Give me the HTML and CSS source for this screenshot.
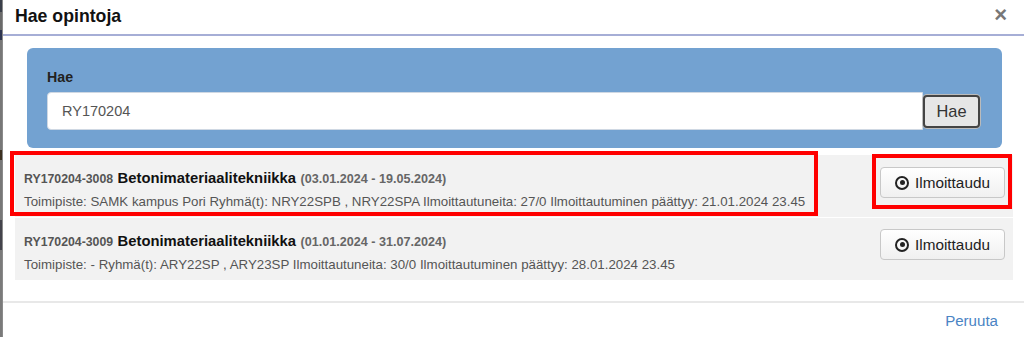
FILE: index.html
```html
<!DOCTYPE html>
<html lang="fi">
<head>
<meta charset="utf-8">
<title>Hae opintoja</title>
<link rel="stylesheet" href="styles.css">
</head>
<body>
<div class="page">
  <div class="backdrop-strip"></div>
  <div class="modal">
    <div class="modal-header">
      <h4 class="modal-title">Hae opintoja</h4>
      <span class="close">&times;</span>
    </div>
    <div class="modal-body">
      <div class="search-panel">
        <label class="search-label" for="q">Hae</label>
        <div class="search-row">
          <input id="q" class="search-input" type="text" value="RY170204">
          <button class="search-btn" type="button">Hae</button>
        </div>
      </div>
      <div class="results">
        <div class="result">
          <div class="result-info">
            <div class="result-title"><span class="code">RY170204-3008</span> <span class="name">Betonimateriaalitekniikka</span> <span class="dates">(03.01.2024 - 19.05.2024)</span></div>
            <div class="result-meta">Toimipiste: SAMK kampus Pori Ryhmä(t): NRY22SPB , NRY22SPA Ilmoittautuneita: 27/0 Ilmoittautuminen päättyy: 21.01.2024 23.45</div>
          </div>
          <button class="enroll-btn first" type="button"><span class="dot-icon"></span>Ilmoittaudu</button>
        </div>
        <div class="result">
          <div class="result-info">
            <div class="result-title"><span class="code">RY170204-3009</span> <span class="name">Betonimateriaalitekniikka</span> <span class="dates">(01.01.2024 - 31.07.2024)</span></div>
            <div class="result-meta">Toimipiste: - Ryhmä(t): ARY22SP , ARY23SP Ilmoittautuneita: 30/0 Ilmoittautuminen päättyy: 28.01.2024 23.45</div>
          </div>
          <button class="enroll-btn" type="button"><span class="dot-icon"></span>Ilmoittaudu</button>
        </div>
        <div class="mark mark-info"></div>
        <div class="mark mark-btn"></div>
      </div>
    </div>
    <div class="modal-footer">
      <a class="cancel" href="#">Peruuta</a>
    </div>
  </div>
</div>
</body>
</html>
```

FILE: styles.css
```css
* { box-sizing: border-box; }
html, body { margin: 0; padding: 0; background: #fff; }
body {
  font-family: "Liberation Sans", Arial, sans-serif;
  color: #333;
  width: 1024px;
  height: 337px;
  overflow: hidden;
}
.page {
  display: flex;
  height: 337px;
}
.backdrop-strip {
  width: 3px;
  flex: none;
  background: linear-gradient(180deg, #3a3f4a 0, #3a3f4a 12px, #6a6a6a 12px, #6a6a6a 30px, #2d3550 30px, #2d3550 40px, #777 40px, #777 150px, #3c3020 150px, #3c3020 160px, #777 160px, #777 220px, #44444c 220px, #44444c 250px, #7a7a7a 250px);
  border-right: 1px solid #8a8a8a;
}
.modal {
  flex: 1;
  display: flex;
  flex-direction: column;
  background: #fff;
}
.modal-header {
  height: 36px;
  border-bottom: 2px solid #a6aed6;
  display: flex;
  align-items: center;
  justify-content: space-between;
  padding: 0 17px 2px 12px;
}
.modal-title {
  margin: 0;
  font-size: 17.7px;
  font-weight: bold;
  color: #111;
}
.close {
  font-size: 22px;
  font-weight: bold;
  color: #777;
  line-height: 1;
  margin-top: -2px;
}
.modal-body {
  padding: 12px 11px 21px 12px;
}
.search-panel {
  margin: 0 11px 0 12px;
  background: #73a2d1;
  border-radius: 6px;
  padding: 21px 21px 17px 20px;
  height: 100px;
}
.search-label {
  display: block;
  font-size: 14.2px;
  font-weight: bold;
  color: #222;
  line-height: 17px;
  margin-bottom: 6px;
}
.search-row {
  display: flex;
  align-items: center;
}
.search-input {
  width: 876px;
  height: 38px;
  border: 1px solid #cfd8e3;
  border-radius: 4px 0 0 4px;
  background: #fff;
  font-family: "Liberation Sans", Arial, sans-serif;
  font-size: 14.5px;
  color: #555;
  padding: 0 14px;
  outline: none;
}
.search-btn {
  width: 57px;
  height: 33px;
  border: 2px solid #444;
  border-radius: 4px;
  background: #e6e6e6;
  font-family: "Liberation Sans", Arial, sans-serif;
  font-size: 16.4px;
  color: #333;
  padding: 0;
  box-shadow: 0 0 0 1px #bbb;
}
.results {
  position: relative;
  margin-top: 7px;
  display: flex;
  flex-direction: column;
  gap: 1px;
}
.result {
  display: flex;
  justify-content: space-between;
  align-items: flex-start;
  background: #f2f2f2;
  height: 62px;
  padding: 0 8px 0 9px;
}
.result-info {
  padding-top: 13px;
}
.result-title {
  line-height: 20px;
  white-space: nowrap;
}
.code {
  font-size: 12.3px;
  font-weight: bold;
  color: #555;
}
.name {
  font-size: 14.8px;
  font-weight: bold;
  color: #111;
}
.dates {
  font-size: 12.6px;
  font-weight: bold;
  color: #666;
}
.result-meta {
  margin-top: 4px;
  font-size: 13.3px;
  line-height: 18px;
  color: #555;
  white-space: nowrap;
}
.enroll-btn {
  margin-top: 11px;
  width: 125px;
  height: 31px;
  display: flex;
  align-items: center;
  justify-content: center;
  gap: 6px;
  border: 1px solid #c8c8c8;
  border-radius: 4px;
  background: linear-gradient(#ffffff, #f0f0f0);
  font-family: "Liberation Sans", Arial, sans-serif;
  font-size: 15.3px;
  color: #222;
  padding: 0;
}
.enroll-btn.first { margin-top: 12px; }
.dot-icon {
  width: 14px;
  height: 14px;
  border: 2px solid #222;
  border-radius: 50%;
  display: inline-flex;
  align-items: center;
  justify-content: center;
}
.dot-icon::after {
  content: "";
  width: 5px;
  height: 5px;
  border-radius: 50%;
  background: #222;
}
.mark {
  position: absolute;
  border: 4px solid #ff0000;
  pointer-events: none;
}
.mark-info {
  left: -5px;
  top: -4px;
  width: 808px;
  height: 65px;
}
.mark-btn {
  left: 857px;
  top: -1px;
  width: 140px;
  height: 55px;
}
.modal-footer {
  border-top: 2px solid #e8e8e8;
  flex: 1;
  display: flex;
  justify-content: flex-end;
  align-items: center;
  padding: 0 26px 0 0;
}
.cancel {
  font-size: 15.1px;
  color: #4a84c4;
  text-decoration: none;
}
```
